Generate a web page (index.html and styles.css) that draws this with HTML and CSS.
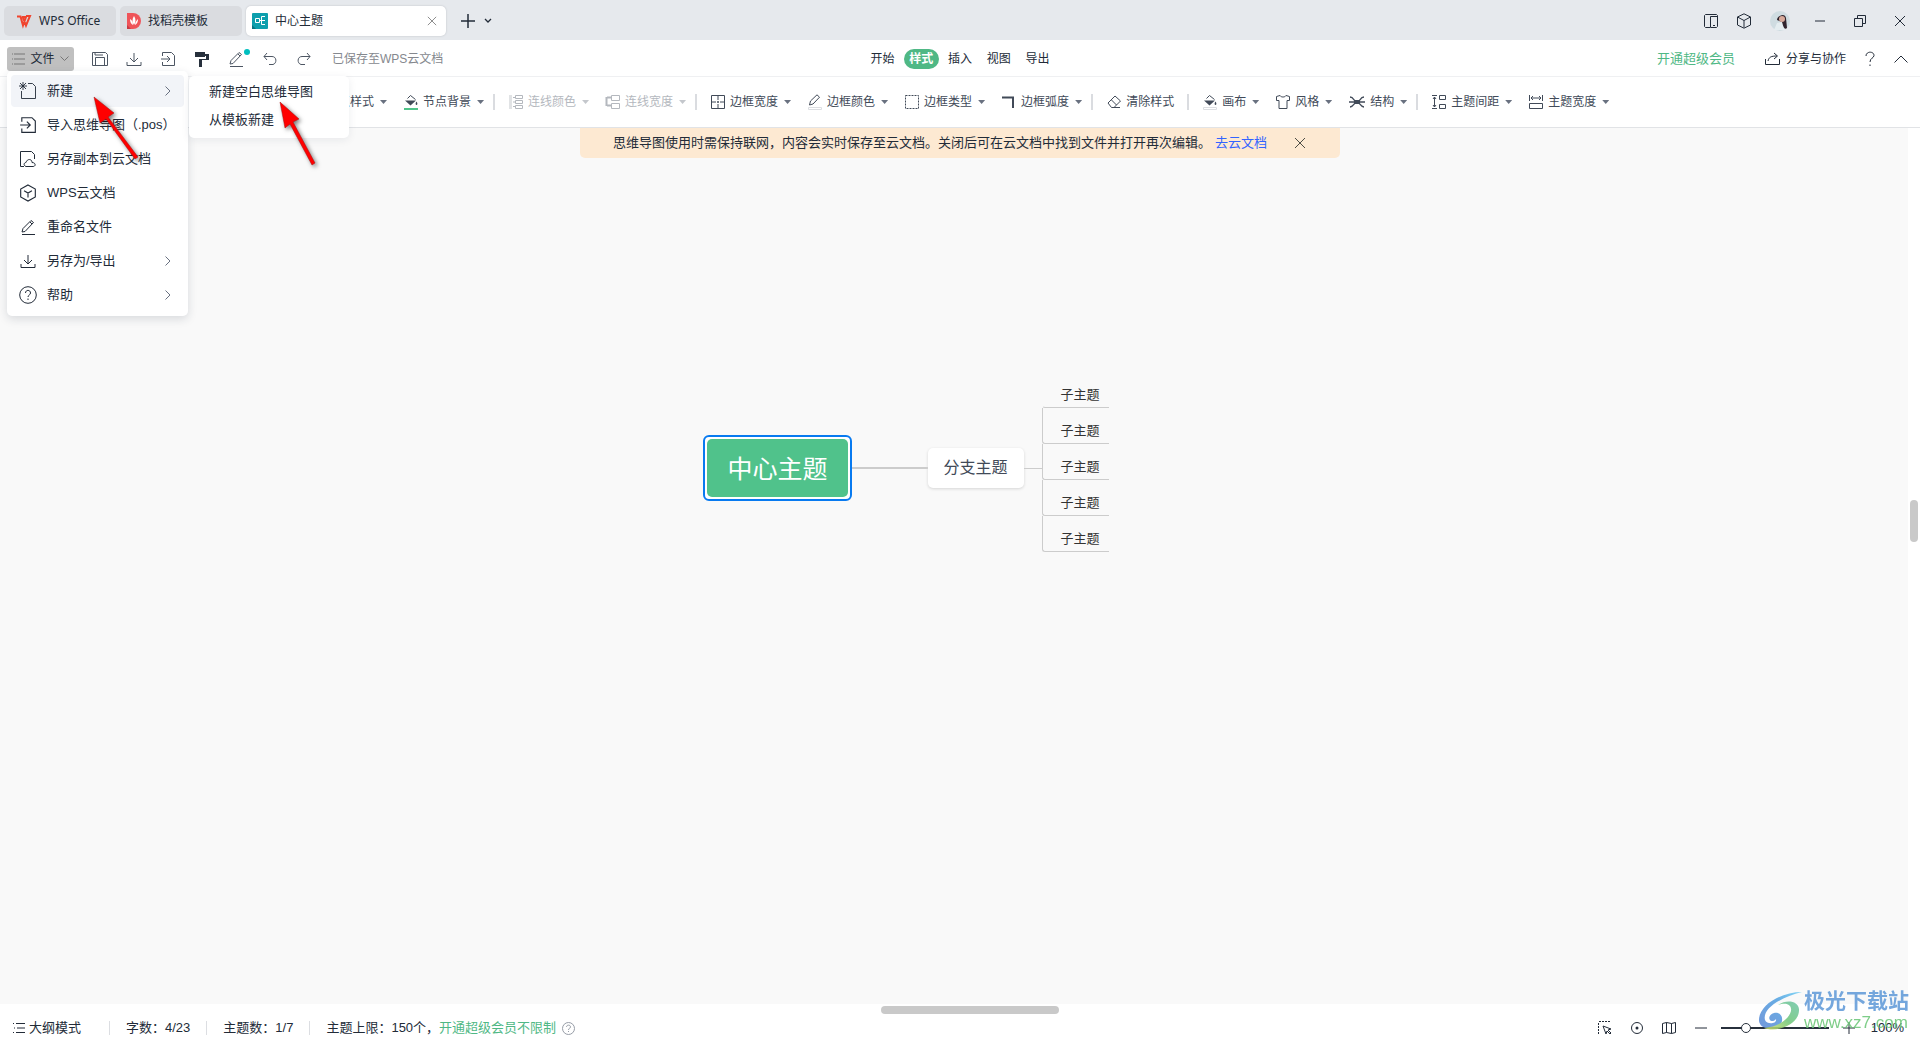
FILE: index.html
```html
<!DOCTYPE html>
<html lang="zh-CN">
<head>
<meta charset="utf-8">
<title>中心主题</title>
<link rel="stylesheet" href="styles.css">
</head>
<body>
<svg class="defs" aria-hidden="true">
  <symbol id="i-x" viewBox="0 0 12 12"><path d="M1 1l10 10M11 1L1 11"/></symbol>
  <symbol id="i-down" viewBox="0 0 16 16"><path d="M8 2v9M4 7l4 4 4-4M1 11v3.500h14V11"/></symbol>
  <symbol id="i-in" viewBox="0 0 16 16"><path d="M2.500 5V1.500h9l3 3V14.500h-12V11M1 8h9M7 5l3 3-3 3"/></symbol>
  <symbol id="i-pen" viewBox="0 0 16 16"><path d="M2 15.500h13M3 9.500L11 1.500l2.500 2L5 12.500l-3 .5zM10 3l2 2"/></symbol>
  <symbol id="i-cube" viewBox="0 0 16 16"><path d="M8 .8l6.500 3.700v7L8 15.200 1.500 11.500v-7zM4.500 6L8 8l3.500-2M8 8v4"/></symbol>
  <symbol id="i-bucket" viewBox="0 0 14 16"><path d="M3.500 4.500L6.500 1.500l5 4" /><path class="solid" d="M1 6.500h11L6.500 11.500zM12.500 7.500c2 3 0 3.500 0 3.500s-2-.5 0-3.500z"/></symbol>
  <symbol id="i-frame" viewBox="0 0 14 14"><path d="M.5.5h13v13H.5z"/><path d="M7 1v12M1 7h12" stroke-dasharray="4 1 2 1"/></symbol>
</svg>

<header class="titlebar">
  <button class="doc-tab home"><svg class="ico" width="16" height="12" viewBox="0 0 16 12"><path d="M1 1.500h3.500l2.500 9 3-8.500h-4M6.500 1.500l3.500 9 4-9.500h-4" stroke="#f0442e" stroke-width="2"/></svg>WPS Office</button>
  <button class="doc-tab template"><svg width="14" height="16" viewBox="0 0 14 16"><path d="M0 0h6a8 8 0 010 16H0z" fill="#ef5459"/><path d="M0 12l4 4H0z" fill="#c93a42"/><path d="M7 3c2 3 2 6 0 9-2-3-2-6 0-9zM3 6c2 1 3 3 3 6-2-1-3-3-3-6zM11 6c0 3-1 5-3 6 0-2 1-4 3-6z" fill="#fff"/></svg>找稻壳模板</button>
  <div class="doc-tab current"><svg width="16" height="16" viewBox="0 0 16 16"><rect width="16" height="16" rx="1" fill="#0d9fad"/><path d="M0 12l4 4H0z" fill="#067481"/><path d="M3.500 5.500h4v4h-4zM7.500 7.500h2M13 3.500H9.500v8H13M9.500 7.500H13" fill="none" stroke="#fff"/></svg><span>中心主题</span><button class="plain" aria-label="关闭标签"><svg class="ico" width="10" height="10"><use href="#i-x"/></svg></button></div>
  <button class="plain add" aria-label="新建标签"><svg class="ico" width="14" height="14" viewBox="0 0 14 14"><path d="M7 0v14M0 7h14" stroke-width="1.500"/></svg></button>
  <button class="plain" aria-label="标签列表"><svg class="ico" width="8" height="6" viewBox="0 0 8 6"><path d="M1 1l3 3 3-3" stroke-width="1.300"/></svg></button>
  <div class="window-tools">
    <button class="plain" aria-label="分屏"><svg class="ico" width="14" height="14" viewBox="0 0 14 14"><path d="M6 13.500H1.500l-1-1v-11l1-1h11l1 1v11l-1 1h-6v-11h7M9 11.500h2"/></svg></button>
    <button class="plain" aria-label="应用"><svg class="ico" width="16" height="16" viewBox="0 0 16 16"><path d="M8 .8l6.500 3.200v8L8 15.200 1.500 12V4zM1.500 4L8 7.500 14.500 4M8 7.500v7"/></svg></button>
    <button class="plain avatar" aria-label="账户"><svg width="20" height="20" viewBox="0 0 20 20"><circle cx="10" cy="10" r="10" fill="#cfdce1"/><path d="M4 19l3-7 6-1 2 8z" fill="#e4edf0"/><path d="M7 9c0-4 8-8 9-2l1 10c-3 3-4-3-5-6z" fill="#30242d"/><circle cx="12" cy="8" r="3" fill="#d8aa9b"/></svg></button>
    <button class="plain wide" aria-label="最小化"><svg class="ico" width="10" height="2" viewBox="0 0 10 2"><path d="M0 1h10"/></svg></button>
    <button class="plain wide" aria-label="还原"><svg class="ico" width="12" height="12" viewBox="0 0 12 12"><path d="M.5 3.500h8v8h-8zM3.500 3V.5h8v8H9"/></svg></button>
    <button class="plain wide" aria-label="关闭"><svg class="ico" width="12" height="12"><use href="#i-x"/></svg></button>
  </div>
</header>

<div class="quickbar">
  <div class="quick-left">
    <button class="file-button"><svg class="ico" width="13" height="12" viewBox="0 0 13 12"><path d="M0 1h1M2 1h11M0 6h1M2 6h11M0 11h1M2 11h11"/></svg>文件<svg class="ico" width="9" height="6" viewBox="0 0 9 6"><path d="M.5.5l4 4 4-4"/></svg></button>
    <div class="quick-icons">
      <button class="plain" aria-label="保存"><svg class="ico" width="16" height="16" viewBox="0 0 16 16"><path d="M.5 1.500h13l2 2v11H.5zM3.500 14V6.500h9V14M3 1.500V4h8"/></svg></button>
      <button class="plain" aria-label="下载"><svg class="ico" width="16" height="16"><use href="#i-down"/></svg></button>
      <button class="plain" aria-label="导入"><svg class="ico" width="16" height="16"><use href="#i-in"/></svg></button>
      <button class="plain" aria-label="格式刷"><svg width="14" height="15" viewBox="0 0 14 15"><path d="M0 0h10v2h4v6H7v7H4V7h7V4h-1v1H0z" fill="#27303c"/></svg></button>
      <button class="plain has-dot" aria-label="画笔"><svg class="ico" width="16" height="16"><use href="#i-pen"/></svg></button>
      <button class="plain" aria-label="撤销"><svg class="ico" width="14" height="14" viewBox="0 0 14 14"><path d="M4 1L1 4.500 4 8M1 4.500h8c5 0 5 7 1 8H6"/></svg></button>
      <button class="plain" aria-label="重做"><svg class="ico" width="14" height="14" viewBox="0 0 14 14"><path d="M10 1l3 3.500L10 8M13 4.500H5c-5 0-5 7-1 8h4"/></svg></button>
    </div>
    <span class="saved">已保存至WPS云文档</span>
  </div>
  <nav class="modes"><button>开始</button><button class="active">样式</button><button>插入</button><button>视图</button><button>导出</button></nav>
  <div class="quick-right">
    <a class="vip" href="#">开通超级会员</a>
    <button class="plain share"><svg class="ico" width="15" height="14" viewBox="0 0 15 14"><path d="M.5 7v5.500h14V7M3 9c1-4 3-5 9-5M9 1l3.500 3L9 7"/></svg>分享与协作</button>
    <button class="plain" aria-label="帮助"><svg class="ico" width="10" height="16" viewBox="0 0 10 16"><path d="M1 5c0-5 8-5 8-.5C9 7 5 7 5 11M5 13.500V15"/></svg></button>
    <button class="plain" aria-label="收起功能区"><svg class="ico" width="14" height="8" viewBox="0 0 14 8"><path d="M.5 7.500L7 1l6.500 6.500"/></svg></button>
  </div>
</div>

<div class="ribbon">
  <div class="group">
    <button class="tool"><svg class="ico" width="14" height="14"><use href="#i-frame"/></svg>节点样式<i></i></button>
    <button class="tool"><svg class="ico" width="14" height="16" viewBox="0 0 14 16"><use href="#i-bucket" width="14" height="16"/><path d="M0 15h14" stroke="#4fc389" stroke-width="2"/></svg>节点背景<i></i></button>
  </div>
  <div class="group">
    <button class="tool" disabled><svg class="ico" width="14" height="14" viewBox="0 0 14 14"><path d="M1.500 0v14" stroke-width="3" opacity=".4"/><path d="M4 2.500h2M4 7h2M4 11.500h2M6.500.5h7v3h-7zM6.500 5.500h7v3h-7zM6.500 10.500h7v3h-7z"/></svg>连线颜色<i></i></button>
    <button class="tool" disabled><svg class="ico" width="14" height="14" viewBox="0 0 14 14"><path d="M.5 2v9M1 2.500h4M1 10.500h4" stroke-width="2"/><path d="M5.500.5h8v5h-8zM5.500 8.500h8v5h-8z"/></svg>连线宽度<i></i></button>
  </div>
  <div class="group">
    <button class="tool"><svg class="ico" width="14" height="14"><use href="#i-frame"/></svg>边框宽度<i></i></button>
    <button class="tool"><svg class="ico" width="14" height="16" viewBox="0 0 14 16"><path d="M1.500 11l1-4L9 .8l2.500 2.400L5 10z"/><path d="M.5 13.500h13v2H.5z" stroke="#dcdee2"/></svg>边框颜色<i></i></button>
    <button class="tool"><svg class="ico" width="14" height="14" viewBox="0 0 14 14"><path d="M.5.5h13v13H.5z" stroke-dasharray="2 1"/></svg>边框类型<i></i></button>
    <button class="tool"><svg class="ico" width="14" height="14" viewBox="0 0 14 14"><path d="M0 2.500h11V13" stroke-width="2"/></svg>边框弧度<i></i></button>
  </div>
  <div class="group">
    <button class="tool no-caret"><svg class="ico" width="14" height="14" viewBox="0 0 14 14"><path d="M1 8l7-7 5.500 5L7 12.500H4.500zM4.500 5L9.500 10M6 12.500h7"/></svg>清除样式</button>
  </div>
  <div class="group">
    <button class="tool"><svg class="ico" width="14" height="16" viewBox="0 0 14 16"><use href="#i-bucket" width="14" height="16"/><path d="M.5 13.500h13v2H.5z" stroke="#dcdee2"/></svg>画布<i></i></button>
    <button class="tool"><svg class="ico" width="14" height="14" viewBox="0 0 14 14"><path d="M.5 1.500L4 .5c1 2 5 2 6 0l3.500 1v4H11v8H3v-8H.5z"/></svg>风格<i></i></button>
    <button class="tool"><svg class="ico" width="16" height="14" viewBox="0 0 16 14"><path d="M1 2c4 0 4 5 7 5s3-5 7-5M1 12c4 0 4-5 7-5s3 5 7 5M0 7h16" stroke-width="1.300"/><path class="solid" d="M5 5h6v4H5z"/></svg>结构<i></i></button>
  </div>
  <div class="group">
    <button class="tool"><svg class="ico" width="14" height="14" viewBox="0 0 14 14"><path d="M0 .5h5M0 13.500h5M2.500 2v10M1 4l1.500-2L4 4M1 10l1.500 2L4 10M7.500.5h6v4h-6zM7.500 9.500h6v4h-6z"/></svg>主题间距<i></i></button>
    <button class="tool"><svg class="ico" width="14" height="14" viewBox="0 0 14 14"><path d="M.5 0v6M13.500 0v6M2 3h10M4 1L2 3l2 2M10 1l2 2-2 2M.5 8.500h13v5H.5z"/></svg>主题宽度<i></i></button>
  </div>
</div>

<main class="workspace">
  <div class="canvas">
    <div class="banner"><span>思维导图使用时需保持联网，内容会实时保存至云文档。关闭后可在云文档中找到文件并打开再次编辑。</span><a href="#">去云文档</a><button class="plain" aria-label="关闭提示"><svg class="ico" width="12" height="12"><use href="#i-x"/></svg></button></div>
    <div class="mindmap">
      <div class="root"><div>中心主题</div></div>
      <div class="link"></div>
      <div class="branch">分支主题</div>
      <div class="stub"></div>
      <ul class="leaves"><li>子主题</li><li>子主题</li><li>子主题</li><li>子主题</li><li>子主题</li></ul>
    </div>
  </div>
  <div class="vscroll"><div></div></div>
</main>
<div class="hscroll"><div></div></div>

<footer class="status">
  <button class="plain outline"><svg class="ico" width="12" height="12" viewBox="0 0 12 12"><path d="M0 1.500h1M3 1.500h9M1 6h1M4 6h8M0 10.500h1M3 10.500h9"/></svg>大纲模式</button>
  <span class="stat">字数：4/23</span>
  <span class="stat">主题数：1/7</span>
  <span class="stat">主题上限：150个，<a class="vip" href="#">开通超级会员不限制</a></span>
  <svg class="ico hint" width="13" height="13" viewBox="0 0 13 13"><circle cx="6.500" cy="6.500" r="6"/><path d="M4.500 5c0-2.500 4-2.500 4 0 0 1.500-2 1-2 3M6.500 9v1"/></svg>
  <div class="zoom">
    <button class="plain" aria-label="选择"><svg class="ico" width="14" height="14" viewBox="0 0 14 14"><path d="M.5 13V1M1 .5h12" stroke-dasharray="2 1"/><path d="M5 5l8 3-3 1 3 3-1 1-3-3-1 3z"/></svg></button>
    <button class="plain" aria-label="定位"><svg class="ico" width="12" height="12" viewBox="0 0 12 12"><circle cx="6" cy="6" r="5.500"/><circle class="solid" cx="6" cy="6" r="1.500"/></svg></button>
    <button class="plain" aria-label="导航"><svg class="ico" width="14" height="12" viewBox="0 0 14 12"><path d="M.5 1.500l4-1 5 1 4-1v10l-4 1-5-1-4 1zM4.500.5v10M9.500 1.500v10"/></svg></button>
    <button class="plain" aria-label="缩小"><svg class="ico" width="12" height="2" viewBox="0 0 12 2"><path d="M0 1h12"/></svg></button>
    <input type="range" min="0" max="100" value="21" aria-label="缩放">
    <button class="plain" aria-label="放大"><svg class="ico" width="12" height="12" viewBox="0 0 12 12"><path d="M6 0v12M0 6h12"/></svg></button>
    <span>100%</span>
  </div>
</footer>

<div class="menu">
  <button class="hover"><svg class="ico" width="18" height="18" viewBox="0 0 18 18"><path d="M9 1.500h4.500l3 3v12h-14V9M4 0v8M0 4h8M1 1l6 6M7 1L1 7" stroke-width=".9"/></svg><span>新建</span><svg class="ico more" width="6" height="10" viewBox="0 0 6 10"><path d="M.5.5L5 5 .5 9.500"/></svg></button>
  <button><svg class="ico" width="18" height="18"><use href="#i-in"/></svg><span>导入思维导图（.pos）</span></button>
  <button><svg class="ico" width="18" height="18" viewBox="0 0 18 18"><path d="M5 16.500H1.500v-15h11l3 3V9M7 16.500c-3-1-2-4 0-4 1-4 6-4 6 0 4 0 4 4 1 4z"/></svg><span>另存副本到云文档</span></button>
  <button><svg class="ico" width="18" height="18"><use href="#i-cube"/></svg><span>WPS云文档</span></button>
  <button><svg class="ico" width="18" height="16"><use href="#i-pen"/></svg><span>重命名文件</span></button>
  <button><svg class="ico" width="18" height="16"><use href="#i-down"/></svg><span>另存为/导出</span><svg class="ico more" width="6" height="10" viewBox="0 0 6 10"><path d="M.5.5L5 5 .5 9.500"/></svg></button>
  <button><svg class="ico" width="18" height="18" viewBox="0 0 18 18"><circle cx="9" cy="9" r="8.300"/><path d="M6.500 7c0-3.500 5-3.500 5 0 0 2-2.500 2-2.500 4M9 12.500V14"/></svg><span>帮助</span><svg class="ico more" width="6" height="10" viewBox="0 0 6 10"><path d="M.5.5L5 5 .5 9.500"/></svg></button>
</div>
<div class="menu submenu"><button>新建空白思维导图</button><button>从模板新建</button></div>

<svg class="pointer first" width="52" height="74" viewBox="0 0 52 74"><path d="M4 6L24 22l-6 4 30 40-3 2-29-40-6 4z"/></svg>
<svg class="pointer second" width="52" height="74" viewBox="0 0 52 74"><path d="M3 5L22 22l-6 3 22 41-3 2-22-41-5 4z"/></svg>

<div class="site-mark"><svg width="46" height="42" viewBox="0 0 46 42"><defs><linearGradient id="sw" x1="0" y1="1" x2="1" y2="0"><stop offset="0" stop-color="#5a86d4"/><stop offset=".6" stop-color="#4f9fe0"/><stop offset="1" stop-color="#6fd0f5"/></linearGradient><linearGradient id="sg" x1="0" y1="1" x2="1" y2="0"><stop offset="0" stop-color="#d9e26a"/><stop offset=".5" stop-color="#6cc577"/><stop offset="1" stop-color="#6cc5a8"/></linearGradient></defs><path d="M44 2C22 2 0 16 1 31c1 8 13 10 20 5 6-5 3-15-5-13-4 1-6 5-4 7 1 2 5 1 6-1 1 5-9 6-11 1C4 18 24 7 44 2z" fill="url(#sw)"/><path d="M20 15c14-5 17 6 8 14-5 5-12 8-22 9 12 5 36-3 35-19-1-8-12-10-21-4z" fill="url(#sg)"/></svg><div><strong>极光下载站</strong><span>www.xz7.com</span></div></div>
</body>
</html>
```
FILE: styles.css
```css
* { box-sizing: border-box; }
body {
  margin: 0;
  min-height: 100vh;
  display: flex;
  flex-direction: column;
  overflow: hidden;
  position: relative;
  background: #fff;
  color: #222b38;
  font: 12px/18px "Liberation Sans", "Noto Sans CJK SC", sans-serif;
}
button { font: inherit; color: inherit; border: 0; background: none; padding: 0; margin: 0; white-space: nowrap; }
a { text-decoration: none; }
svg { flex: none; }
.defs { position: absolute; width: 0; height: 0; }
.ico { fill: none; stroke: currentColor; stroke-width: 1; overflow: visible; }
.solid { fill: currentColor; stroke: none; }
.plain { display: flex; align-items: center; justify-content: center; }
.vip { color: #4fb885; font-size: 13px; }

.titlebar { display: flex; align-items: center; gap: 4px; height: 40px; padding: 2px 0 0 4px; background: #e6e9ed; }
.doc-tab { display: flex; align-items: center; height: 30px; border-radius: 5px; background: #dadce0; gap: 7px; padding: 0 12px; }
.home { width: 112px; font-family: "Noto Sans", sans-serif; }
.template { width: 122px; padding-left: 7px; }
.current { width: 200px; padding: 0 9px 0 6px; background: #fff; box-shadow: 0 0 2px #b9bcc2; }
.current span { flex: 1; }
.current button { color: #777; }
.add { width: 24px; margin-left: 6px; }
.window-tools { margin-left: auto; display: flex; align-items: center; }
.window-tools button { width: 33px; height: 36px; }
.window-tools .avatar { width: 40px; }
.window-tools .wide { width: 40px; }

.quickbar { display: grid; grid-template-columns: 1fr 190px 1fr; align-items: center; height: 37px; padding-top: 2px; border-bottom: 1px solid #eff0f2; }
.quick-left { display: flex; align-items: center; padding-left: 7px; }
.file-button { display: flex; align-items: center; justify-content: center; gap: 5px; width: 67px; height: 24px; border-radius: 3px; background: #c0c0c0; }
.file-button svg { color: #777; }
.quick-icons { display: flex; padding-left: 9px; color: #4d5663; }
.quick-icons button { width: 34px; height: 24px; }
.has-dot { position: relative; }
.has-dot::after { content: ""; position: absolute; right: 3px; top: 2px; width: 6px; height: 6px; border-radius: 50%; background: #00bfbf; }
.saved { padding-left: 11px; color: #85888e; }
.modes { display: flex; justify-content: space-between; }
.modes button { width: 35px; height: 20px; border-radius: 10px; }
.modes .active { background: #4fb885; color: #fff; font-weight: bold; }
.quick-right { display: flex; align-items: center; justify-content: flex-end; gap: 19px; padding-right: 12px; }
.quick-right .share { gap: 6px; margin-left: 11px; }

.ribbon { display: flex; align-items: center; height: 51px; padding-left: 307px; border-bottom: 1px solid #e1e3e6; color: #414a58; }
.group { display: flex; align-items: center; gap: 17px; }
.group + .group::before { content: ""; width: 2px; height: 16px; margin: 0 -3px 0 9px; background: #dadce0; }
.tool { display: flex; align-items: center; gap: 5px; }
.tool i { width: 7px; height: 4px; margin: 0 0 0 1px; background: #697180; clip-path: polygon(0 0, 100% 0, 50% 100%); }
.tool:disabled { color: #b4b8be; }
.tool:disabled i { background: #c4c7cc; }
.no-caret { padding-right: 4px; }

.workspace { flex: 1; display: flex; }
.canvas { flex: 1; display: flex; flex-direction: column; align-items: center; background: #f9f9f9; padding-left: 12px; }
.banner { display: flex; align-items: center; width: 760px; height: 30px; padding-left: 33px; border-radius: 0 0 5px 5px; background: #fde9d2; font-size: 13px; white-space: nowrap; }
.banner a { color: #3264ff; margin-left: 4px; }
.banner button { margin-left: 27px; color: #4d4d45; }
.mindmap { display: flex; align-items: center; margin: 214px 108px 0 0; }
.root { border: 2px solid #087af0; border-radius: 6px; background: #fff; padding: 2px; }
.root div { padding: 0 20px; height: 58px; line-height: 60px; border-radius: 5px; background: #50c28b; color: #fff; font-size: 25px; }
.link { width: 76px; height: 2px; background: #ccc; }
.branch { padding: 0 16px; line-height: 40px; font-size: 16px; color: #414a58; background: #fff; border-radius: 5px; box-shadow: 0 1px 3px #d5d5d5; }
.stub { width: 18px; height: 1px; background: #ccc; }
.leaves { list-style: none; margin: 0 0 12px; padding: 0; font-size: 13px; color: #333; }
.leaves li { width: 67px; height: 36px; padding: 14px 0 0 18px; border-bottom: 1px solid #ccc; border-left: 1px solid #ccc; border-bottom-left-radius: 3px; }
.leaves li:first-child { border-left-color: transparent; }
.vscroll { width: 12px; display: flex; align-items: center; justify-content: center; padding-bottom: 90px; background: #fff; }
.vscroll div { width: 8px; height: 42px; border-radius: 4px; background: #c9c9c9; }
.hscroll { height: 12px; display: flex; align-items: center; justify-content: center; padding-left: 20px; }
.hscroll div { width: 178px; height: 8px; border-radius: 4px; background: #c9c9c9; }

.status { display: flex; align-items: center; height: 24px; padding: 0 16px 0 13px; font-size: 13px; white-space: nowrap; }
.outline { gap: 4px; }
.stat { display: flex; align-items: center; }
.stat::before { content: ""; width: 1px; height: 14px; margin: 0 16px 0 16px; background: #dcdee2; }
.outline + .stat::before { margin-left: 28px; }
.hint { margin-left: 6px; color: #979da7; }
.zoom { display: flex; align-items: center; margin-left: auto; }
.zoom button { width: 32px; height: 20px; }
.zoom input { appearance: none; width: 108px; height: 14px; margin: 0 4px; background: linear-gradient(#27303c, #27303c) center / 100% 2px no-repeat; }
.zoom input::-webkit-slider-thumb { appearance: none; width: 10px; height: 10px; border: 1px solid #27303c; border-radius: 50%; background: #fff; }
.zoom span { margin-left: 6px; }

.menu { position: absolute; left: 7px; top: 71px; width: 181px; padding: 4px 4px 5px; border-radius: 5px; background: #fff; box-shadow: 0 3px 10px rgba(30, 40, 60, .15); font-size: 13px; display: flex; flex-direction: column; gap: 2px; }
.menu button { display: flex; align-items: center; gap: 10px; height: 32px; padding: 0 13px 0 8px; border-radius: 4px; text-align: left; }
.menu .hover { background: #f2f4f8; }
.menu span { flex: 1; }
.menu .more { color: #687080; }
.submenu { left: 189px; top: 76px; width: 160px; padding: 2px 4px 4px; gap: 0; box-shadow: 0 2px 8px rgba(30, 40, 60, .08); }
.submenu button { height: 28px; padding-left: 16px; }

.pointer { position: absolute; fill: #f00; stroke: #a01010; stroke-width: .5; filter: drop-shadow(2px 2px 2px rgba(0, 0, 0, .5)); }
.first { left: 90px; top: 91px; }
.second { left: 277px; top: 97px; }

.site-mark { position: absolute; right: 11px; bottom: 7px; display: flex; align-items: center; opacity: .85; pointer-events: none; }
.site-mark div { display: flex; flex-direction: column; }
.site-mark strong { font-size: 21px; line-height: 24px; color: #5d98d8; }
.site-mark span { font-size: 17px; line-height: 20px; color: #68c574; }
```
